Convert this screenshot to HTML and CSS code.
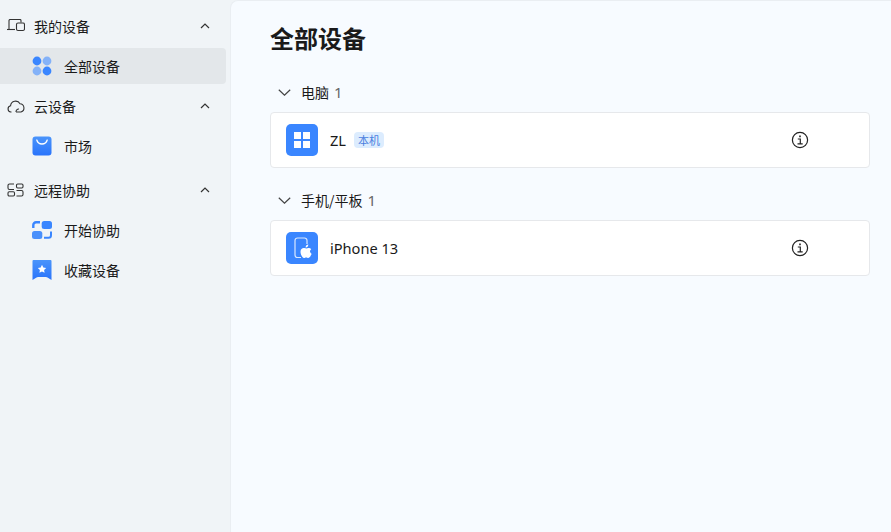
FILE: index.html
```html
<!DOCTYPE html>
<html lang="zh">
<head>
<meta charset="utf-8">
<title>全部设备</title>
<link rel="stylesheet" href="styles.css">
</head>
<body>
<div class="app">
  <aside class="sidebar">
    <div class="group">
      <div class="group-head">
        <svg class="gi" viewBox="0 0 18 14" fill="none" stroke="#333" stroke-width="1.1"><path d="M2 10V1.500a1 1 0 0 1 1-1h10a1 1 0 0 1 1 1V3.500"/><path d="M0 10.500H8"/><rect x="9.500" y="4" width="8" height="7.500" rx="1.500"/></svg>
        <span class="label">我的设备</span>
        <svg class="chev" viewBox="0 0 10 6" fill="none" stroke="#333" stroke-width="1.2"><path d="M1 5l4-4 4 4"/></svg>
      </div>
      <div class="item active">
        <svg class="ii" viewBox="0 0 20 20"><circle cx="5" cy="5" r="4.4" fill="#3a86ff"/><circle cx="15" cy="5" r="4.4" fill="#84b2f8"/><circle cx="5" cy="15" r="4.4" fill="#84b2f8"/><circle cx="15" cy="15" r="4.4" fill="#3a86ff"/></svg>
        <span class="label">全部设备</span>
      </div>
    </div>
    <div class="group">
      <div class="group-head">
        <svg class="gi" viewBox="0 0 18 14" fill="none" stroke="#333" stroke-width="1.1"><path d="M4.500 13H3.800A3.200 3.200 0 0 1 3.600 6.700 5 5 0 0 1 13 4.800a4.200 4.200 0 0 1 1 8.200H9"/><path d="M9 13a2.700 2.700 0 0 1 3-3"/></svg>
        <span class="label">云设备</span>
        <svg class="chev" viewBox="0 0 10 6" fill="none" stroke="#333" stroke-width="1.2"><path d="M1 5l4-4 4 4"/></svg>
      </div>
      <div class="item">
        <svg class="ii" viewBox="0 0 20 20"><defs><linearGradient id="g1" x1="0" y1="0" x2="0" y2="1"><stop offset="0" stop-color="#4a94fb"/><stop offset="1" stop-color="#2a74fb"/></linearGradient></defs><rect x=".5" y=".5" width="19" height="19" rx="3" fill="url(#g1)"/><path d="M4.800 4c.8 2.800 2.800 4 5.200 4s4.400-1.200 5.200-4" fill="none" stroke="#fff" stroke-width="1.300" stroke-linecap="round"/></svg>
        <span class="label">市场</span>
      </div>
    </div>
    <div class="group last">
      <div class="group-head">
        <svg class="gi" viewBox="0 0 18 14" fill="none" stroke="#333" stroke-width="1.1"><path d="M7 6.500H2.500A1.500 1.500 0 0 1 1 5V2.500A1.500 1.500 0 0 1 2.500 1H7"/><rect x="9.500" y="1" width="6.500" height="4" rx="1.200"/><rect x="1" y="8.800" width="6.500" height="4.200" rx="1.200"/><path d="M9.500 13h5a1.500 1.500 0 0 0 1.500-1.500V9A1.500 1.500 0 0 0 14.500 7.500H9.500"/></svg>
        <span class="label">远程协助</span>
        <svg class="chev" viewBox="0 0 10 6" fill="none" stroke="#333" stroke-width="1.2"><path d="M1 5l4-4 4 4"/></svg>
      </div>
      <div class="item">
        <svg class="ii" viewBox="0 0 20 18"><path d="M8 1.300H4A2.700 2.700 0 0 0 1.300 4v3" fill="none" stroke="#3a86ff" stroke-width="2.400"/><rect x="9.700" y="0" width="10.300" height="8" rx="2.500" fill="#3a86ff"/><rect x="0" y="10" width="10.300" height="8" rx="2.500" fill="#4a90fb"/><path d="M12 16.800h4.500a2.500 2.500 0 0 0 2.500-2.500V10.500" fill="none" stroke="#3a86ff" stroke-width="2"/></svg>
        <span class="label">开始协助</span>
      </div>
      <div class="item">
        <svg class="ii" viewBox="0 0 20 20"><defs><linearGradient id="g2" x1="0" y1="0" x2="0" y2="1"><stop offset="0" stop-color="#4a94fb"/><stop offset="1" stop-color="#2a74fb"/></linearGradient></defs><path d="M1.500 0h17a1 1 0 0 1 1 1v19l-4-2.500a3 3 0 0 0-1.500-.5H6a3 3 0 0 0-1.500.5L.5 20V1a1 1 0 0 1 1-1z" fill="url(#g2)"/><path d="M10 4.800l1.300 2.700 2.900.4-2.100 2 .5 2.900-2.600-1.400-2.600 1.400.5-2.900-2.100-2 2.900-.4z" fill="#fff"/></svg>
        <span class="label">收藏设备</span>
      </div>
    </div>
  </aside>
  <main class="main">
    <h1 class="title">全部设备</h1>
    <section class="section">
      <div class="sec-head">
        <svg class="sec-chev" viewBox="0 0 13 7" fill="none" stroke="#444" stroke-width="1.200"><path d="M.8.8l5.700 5.400L12.200.8"/></svg>
        <span class="sec-name">电脑</span><span class="count">1</span>
      </div>
      <div class="card">
        <svg class="dev" viewBox="0 0 32 32"><rect width="32" height="32" rx="5" fill="#3a86ff"/><path d="M8 8h7v7H8zM17 8h7v7h-7zM8 17h7v7H8zM17 17h7v7h-7z" fill="#fff"/></svg>
        <span class="dev-name">ZL</span>
        <span class="tag">本机</span>
        <svg class="info" viewBox="0 0 18 18" fill="none" stroke="#222" stroke-width="1.200"><circle cx="9" cy="9" r="7.600"/><path d="M6.800 8h2.500v4.500M6.500 12.800h5.200"/><path d="M9 4.600v1.600" stroke-width="1.600"/></svg>
      </div>
    </section>
    <section class="section">
      <div class="sec-head">
        <svg class="sec-chev" viewBox="0 0 13 7" fill="none" stroke="#444" stroke-width="1.200"><path d="M.8.8l5.700 5.400L12.200.8"/></svg>
        <span class="sec-name">手机/平板</span><span class="count">1</span>
      </div>
      <div class="card">
        <svg class="dev" viewBox="0 0 32 32"><rect width="32" height="32" rx="5" fill="#3a86ff"/><path d="M15 25.500h-3.500A2.500 2.500 0 0 1 9 23V8.500A2.500 2.500 0 0 1 11.500 6h7A2.500 2.500 0 0 1 21 8.500V12" fill="none" stroke="#fff" stroke-opacity=".8" stroke-width="1.200"/><path transform="translate(-2.500 0)" d="M20.700 16c1 0 1.700.5 2.300.5.500 0 1.300-.6 2.500-.5.900.1 1.700.5 2.200 1.200-1.800 1.200-1.500 3.700.4 4.500-.6 1.800-1.900 4.300-3.300 4.300-.8 0-1.200-.5-2.100-.5-1 0-1.400.5-2.100.5-1.700 0-3.600-3.600-3.600-6.300 0-2.400 1.600-3.700 3.300-3.700zM24.800 12.500c.1 1.500-1.200 3-2.600 2.900-.2-1.500 1.200-2.900 2.600-2.900z" fill="#fff"/></svg>
        <span class="dev-name">iPhone 13</span>
        <svg class="info" viewBox="0 0 18 18" fill="none" stroke="#222" stroke-width="1.200"><circle cx="9" cy="9" r="7.600"/><path d="M6.800 8h2.500v4.500M6.500 12.800h5.200"/><path d="M9 4.600v1.600" stroke-width="1.600"/></svg>
      </div>
    </section>
  </main>
</div>
</body>
</html>
```
FILE: styles.css
```css
* { box-sizing: border-box; }
html, body { margin: 0; height: 100%; overflow: hidden; }
body {
  font-family: "Noto Sans", "Noto Sans CJK SC", sans-serif;
  font-size: 14px;
  color: #1a1a1a;
  background: #f0f4f7;
}
.app { display: flex; height: 532px; }
.sidebar {
  width: 230px;
  flex: none;
  padding-top: 7px;
  padding-right: 4px;
}
.group { display: flex; flex-direction: column; }
.group.last { margin-top: 4px; }
.group-head {
  height: 40px;
  display: flex;
  align-items: center;
  padding: 0 16px 2px 7px;
}
.gi { width: 18px; height: 14px; flex: none; margin-right: 9px; }
.group-head .label { flex: 1; }
.label { font-family: "Noto Sans CJK SC", sans-serif; line-height: 20px; }
.chev { width: 10px; height: 6px; flex: none; }
.item {
  height: 40px;
  display: flex;
  align-items: center;
  padding: 0 0 2px 32px;
}
.item.active {
  height: 36px;
  margin: 1px 0 3px;
  padding-bottom: 0;
  background: #e3e7ea;
  border-radius: 0 4px 4px 0;
}
.ii { width: 20px; height: 20px; flex: none; margin-right: 12px; }
.main {
  flex: 1;
  min-width: 0;
  background: #f7fbff;
  border: 1px solid #eaeef2;
  border-right: 0;
  border-bottom: 0;
  border-top-left-radius: 8px;
  padding: 20px 21px 0 39px;
}
.title {
  margin: 0 0 19px;
  font-family: "Noto Sans CJK SC", sans-serif;
  font-size: 24px;
  font-weight: 700;
  line-height: 34px;
  color: #1a1a1a;
}
.section { margin-bottom: 14px; }
.sec-head {
  height: 38px;
  display: flex;
  align-items: center;
  padding: 0 0 2px 8px;
}
.sec-chev { width: 13px; height: 7px; flex: none; margin-right: 10px; }
.sec-name { font-family: "Noto Sans CJK SC", sans-serif; line-height: 20px; }
.count { margin-left: 5px; color: #666; font-size: 15px; }
.card {
  height: 56px;
  display: flex;
  align-items: center;
  position: relative;
  background: #fff;
  border: 1px solid #e6e8eb;
  border-radius: 4px;
  padding-left: 15px;
}
.dev { width: 32px; height: 32px; flex: none; margin-right: 12px; }
.dev-name { font-size: 14.6px; color: #1a1a1a; }
.tag {
  margin-left: 8px;
  height: 16px;
  padding: 0 4px;
  border-radius: 4px;
  background: #dcecfe;
  color: #4a7fe0;
  font-family: "Noto Sans CJK SC", sans-serif;
  font-size: 11px;
  line-height: 16px;
}
.info { width: 18px; height: 18px; position: absolute; left: 520px; top: 18px; }
```
